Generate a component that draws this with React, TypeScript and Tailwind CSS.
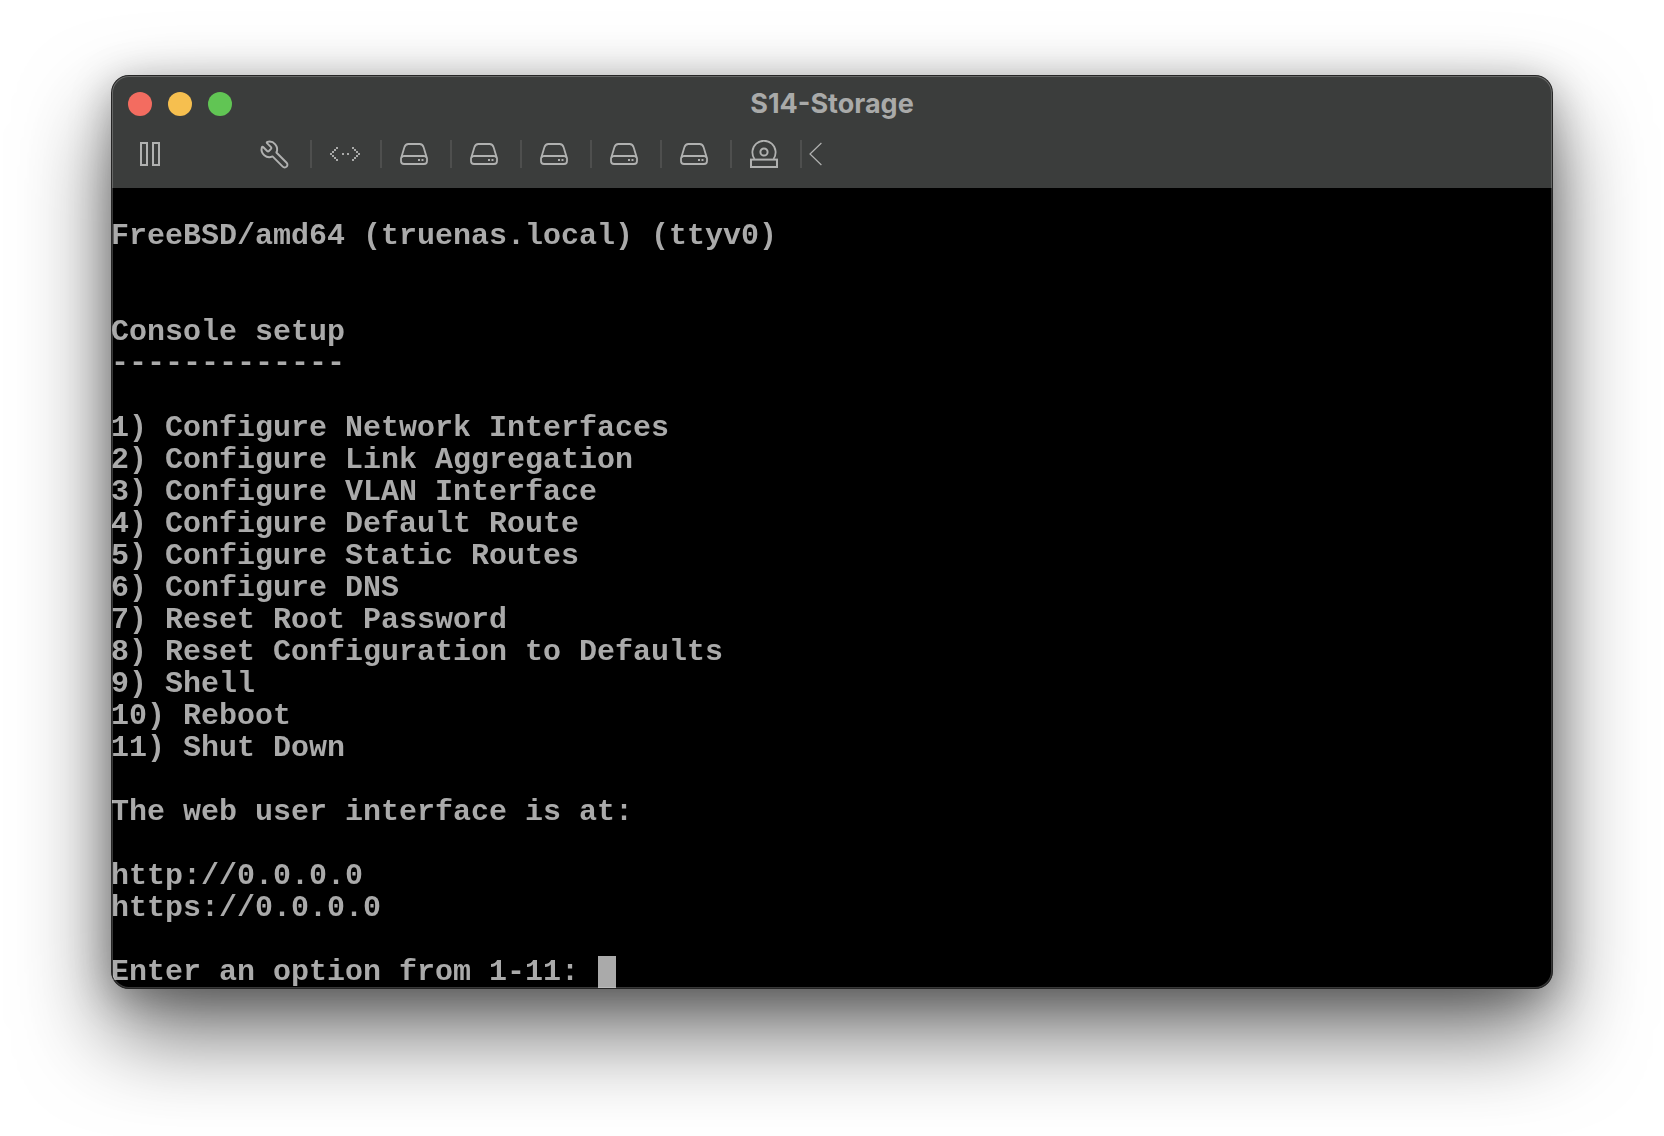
import { Wrench } from "lucide-react";

const before = [
  "",
  "FreeBSD/amd64 (truenas.local) (ttyv0)",
  "",
  "",
  "Console setup",
];

const after = [
  "",
  "1) Configure Network Interfaces",
  "2) Configure Link Aggregation",
  "3) Configure VLAN Interface",
  "4) Configure Default Route",
  "5) Configure Static Routes",
  "6) Configure DNS",
  "7) Reset Root Password",
  "8) Reset Configuration to Defaults",
  "9) Shell",
  "10) Reboot",
  "11) Shut Down",
  "",
  "The web user interface is at:",
  "",
  "http://0.0.0.0",
  "https://0.0.0.0",
  "",
];

function DiskIcon() {
  return (
    <svg width="28" height="22" viewBox="0 0 28 22" fill="none" stroke="#b0b1b0" strokeWidth="1.8">
      <path d="M1 15.5 4.4 4.2C5 2.2 6.3 1 8.4 1h11.2c2.1 0 3.4 1.2 4 3.2L27 15.5V18c0 2-1 3-3 3H4c-2 0-3-1-3-3z" />
      <path d="M1.4 14.6C2 13.6 3 13 4 13h20c1 0 2 .6 2.6 1.6" />
      <path d="M18 17h2M21.5 17h2" strokeWidth="1.8" />
    </svg>
  );
}

function ToolCell({ children }: { children: React.ReactNode }) {
  return (
    <div className="flex h-7 w-[70px] items-center justify-center border-r-2 border-[#4e4f4e] pr-[4px]">
      {children}
    </div>
  );
}

export default function App() {
  return (
    <div className="min-h-[1136px] overflow-hidden bg-white pl-[111px] pt-[75px]">
      <div className="relative w-[1442px] overflow-hidden rounded-[18px] shadow-[0_44px_90px_rgba(0,0,0,0.58),0_8px_40px_rgba(0,0,0,0.28)]">
        {/* title bar + toolbar */}
        <div className="h-[113px] bg-[#3b3d3c] pt-[2px]">
          <div className="grid h-[54px] grid-cols-[1fr_auto_1fr] items-center px-[17px]">
            <div className="flex gap-4">
              <span className="h-6 w-6 rounded-full bg-[#f36c60]" />
              <span className="h-6 w-6 rounded-full bg-[#f6bf4f]" />
              <span className="h-6 w-6 rounded-full bg-[#61c554]" />
            </div>
            <div className="pb-[2px] font-['Inter',sans-serif] text-[27px] font-bold leading-none text-[#a9aaa9]">
              S14-Storage
            </div>
            <div />
          </div>
          <div className="mt-[9px] flex h-[28px] items-center pl-[29px]">
            <div className="flex w-[102px] items-center">
              <span className="h-6 w-2 border-2 border-[#b0b1b0]" />
              <span className="ml-[4px] h-6 w-2 border-2 border-[#b0b1b0]" />
            </div>
            <ToolCell>
              <Wrench className="-scale-x-100" size={31} strokeWidth={1.5} color="#b0b1b0" />
            </ToolCell>
            <ToolCell>
              <svg className="ml-[2px]" width="30" height="16" viewBox="0 0 30 16" fill="#a9aaa9">
                <path d="M6 1h2v2H6zM4 3h2v2H4zM2 5h2v2H2zM0 7h2v2H0zM2 9h2v2H2zM4 11h2v2H4zM6 13h2v2H6z" />
                <path d="M22 1h2v2h-2zM24 3h2v2h-2zM26 5h2v2h-2zM28 7h2v2h-2zM26 9h2v2h-2zM24 11h2v2h-2zM22 13h2v2h-2z" />
                <path d="M12 7h2v2h-2zM17 7h2v2h-2z" />
              </svg>
            </ToolCell>
            <ToolCell><DiskIcon /></ToolCell>
            <ToolCell><DiskIcon /></ToolCell>
            <ToolCell><DiskIcon /></ToolCell>
            <ToolCell><DiskIcon /></ToolCell>
            <ToolCell><DiskIcon /></ToolCell>
            <ToolCell>
              <svg width="28" height="28" viewBox="0 0 28 28" fill="none" stroke="#b0b1b0" strokeWidth="1.8">
                <path d="M4.5 19A11.6 11.6 0 1 1 23.5 19" />
                <circle cx="14" cy="12" r="3.6" strokeWidth="2" />
                <rect x="1" y="19.6" width="26" height="7.4" strokeWidth="2" />
              </svg>
            </ToolCell>
            <div className="ml-[7px] flex h-7 items-center">
              <svg width="13" height="24" viewBox="0 0 13 24" fill="none" stroke="#b0b1b0" strokeWidth="1.2">
                <path d="M12.4 1 1 12l11.4 11" />
              </svg>
            </div>
          </div>
        </div>
        {/* console */}
        <div className="h-[801px] whitespace-pre bg-black font-['Liberation_Mono',monospace] text-[30px] font-bold leading-[32px] text-[#aaaaaa] blur-[0.4px]">
          {before.map((line, i) => (
            <div key={i} className="h-8">
              {line}
            </div>
          ))}
          <div className="h-8 -translate-y-[1px] text-[30px] font-bold">-------------</div>
          {after.map((line, i) => (
            <div key={i} className="h-8">
              {line}
            </div>
          ))}
          <div className="flex h-8">
            Enter an option from 1-11:{" "}
            <span className="ml-px h-8 w-[18px] bg-[#aaaaaa]" />
          </div>
        </div>
        {/* window edge */}
        <div className="pointer-events-none absolute inset-0 rounded-[18px] shadow-[inset_0_0_0_1px_#262626,inset_0_0_0_2px_rgba(255,255,255,0.22)]" />
      </div>
    </div>
  );
}
